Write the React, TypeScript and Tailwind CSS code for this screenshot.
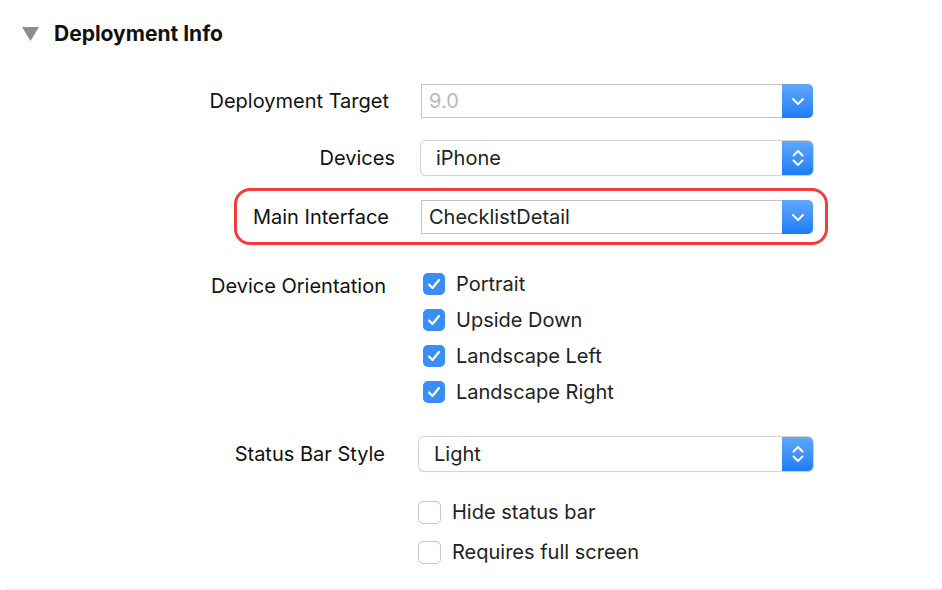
import React from "react";

const FONT = { fontFamily: 'Inter, "Open Sans", "Liberation Sans", Arial, sans-serif' };

const ChevronDown = () => (
  <svg width="14" height="9" viewBox="0 0 14 9" fill="none">
    <path d="M2 2l5 5 5-5" stroke="white" strokeWidth="2" strokeLinecap="round" strokeLinejoin="round" />
  </svg>
);

const UpDown = () => (
  <svg width="14" height="22" viewBox="0 0 14 22" fill="none">
    <path d="M2.5 8.5L7 4l4.5 4.5M2.5 13.5L7 18l4.5-4.5" stroke="white" strokeWidth="2" strokeLinecap="round" strokeLinejoin="round" />
  </svg>
);

const Check = () => (
  <svg width="14" height="12" viewBox="0 0 14 12" fill="none">
    <path d="M2 6.5l3.5 3.5L12 2" stroke="white" strokeWidth="2.2" strokeLinecap="round" strokeLinejoin="round" />
  </svg>
);

type SelectProps = { value: string; kind: "combo" | "popup"; muted?: boolean; wide?: boolean };

const Select = ({ value, kind, muted, wide }: SelectProps) => {
  if (kind === "combo") {
    return (
      <div className="flex h-[34px] w-[392px]">
        <div className={`flex flex-1 items-center border border-[#c4c4c4] border-r-0 pl-[7px] text-[20px] ${muted ? "text-[#b9b9b9]" : "text-[#222]"}`}>
          {value}
        </div>
        <div className="flex w-[31px] items-center justify-center rounded-r-[5px] bg-gradient-to-b from-[#5fa8fb] to-[#1a7cfa]">
          <ChevronDown />
        </div>
      </div>
    );
  }
  return (
    <div className={`flex h-[34px] rounded-[5px] shadow-[0_0_0_1px_#d4d4d4,0_1px_1px_rgba(0,0,0,0.2)] ${wide ? "w-[394px]" : "w-[392px]"}`}>
      <div className="flex flex-1 items-center pl-[15px] text-[20px] text-[#222]">{value}</div>
      <div className="flex w-[31px] items-center justify-center rounded-r-[5px] bg-gradient-to-b from-[#5fa8fb] to-[#1a7cfa]">
        <UpDown />
      </div>
    </div>
  );
};

const CheckRow = ({ label }: { label: string }) => (
  <div className="flex h-[36px] items-center">
    <div className="flex h-[22px] w-[22px] items-center justify-center rounded-[5px] bg-[#3a8ef7]">
      <Check />
    </div>
    <span className="ml-[11px] text-[20px] text-[#222]">{label}</span>
  </div>
);

const EmptyRow = ({ label }: { label: string }) => (
  <div className="flex h-[40px] items-center">
    <div className="h-[23px] w-[23px] rounded-[5px] border border-[#c8c8c8] bg-white" />
    <span className="ml-[11px] text-[20px] text-[#222]">{label}</span>
  </div>
);

const Label = ({ children, className = "" }: { children: React.ReactNode; className?: string }) => (
  <div className={`shrink-0 text-right text-[20px] text-[#111] ${className}`}>{children}</div>
);

export default function App() {
  return (
    <div className="relative h-[590px] w-[942px] overflow-hidden bg-white" style={FONT}>
      <div className="flex items-center pt-[20px]">
        <svg className="ml-[22px]" width="17" height="14" viewBox="0 0 17 14">
          <path d="M0 0h17L8.5 14z" fill="#8e8e8e" />
        </svg>
        <h2 className="ml-[15px] text-[21px] leading-[28px] font-bold text-[#111]">Deployment Info</h2>
      </div>

      <div className="mt-[36px] flex flex-col">
        <div className="flex h-[34px] items-center">
          <Label className="w-[389px]">Deployment Target</Label>
          <div className="ml-[32px]">
            <Select kind="combo" value="9.0" muted />
          </div>
        </div>

        <div className="mt-[23px] flex h-[34px] items-center">
          <Label className="w-[395px]">Devices</Label>
          <div className="ml-[26px]">
            <Select kind="popup" value="iPhone" />
          </div>
        </div>

        <div className="relative mt-[25px] flex h-[34px] items-center">
          <Label className="w-[389px]">Main Interface</Label>
          <div className="ml-[32px]">
            <Select kind="combo" value="ChecklistDetail" />
          </div>
          <div className="pointer-events-none absolute left-[234px] top-[-12px] h-[57px] w-[594px] rounded-[16px] border-[3px] border-[#f43c3c]" />
        </div>

        <div className="mt-[32px] flex">
          <Label className="mt-[5px] w-[386px]">Device Orientation</Label>
          <div className="ml-[37px] flex flex-col">
            <CheckRow label="Portrait" />
            <CheckRow label="Upside Down" />
            <CheckRow label="Landscape Left" />
            <CheckRow label="Landscape Right" />
          </div>
        </div>

        <div className="mt-[27px] flex h-[34px] items-center">
          <Label className="w-[385px]">Status Bar Style</Label>
          <div className="ml-[34px]">
            <Select kind="popup" value="Light" wide />
          </div>
        </div>

        <div className="ml-[418px] mt-[21px] flex flex-col">
          <EmptyRow label="Hide status bar" />
          <EmptyRow label="Requires full screen" />
        </div>
      </div>

      <div className="absolute bottom-0 left-[6px] right-0 h-[2px] bg-[#f2f2f2]" />
    </div>
  );
}
